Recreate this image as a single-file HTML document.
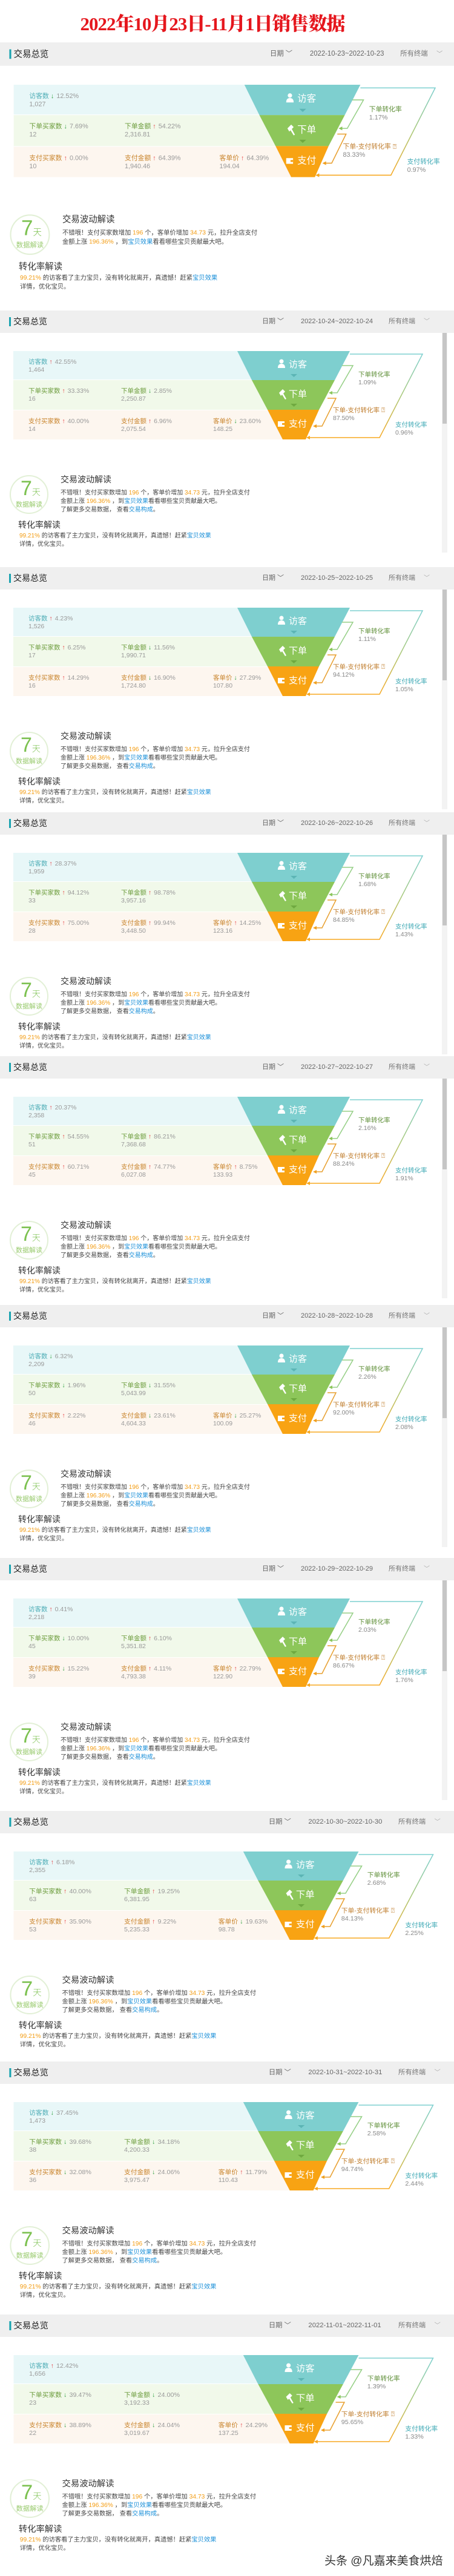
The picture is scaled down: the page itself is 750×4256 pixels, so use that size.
<!DOCTYPE html>
<html><head><meta charset="utf-8">
<style>
*{margin:0;padding:0;box-sizing:border-box}
body{width:750px;height:4256px;position:relative;background:#fff;font-family:"Liberation Sans","Noto Sans CJK SC",sans-serif;overflow:hidden}
.title{position:absolute;left:0;top:14px;width:702px;text-align:center;font-family:"Liberation Serif","Noto Serif CJK SC",serif;font-weight:900;font-size:31px;color:#e5161d;letter-spacing:-1px}
.p{position:absolute;left:0;width:750px;height:418px;transform-origin:0 0}
.hd{position:absolute;top:0;left:0;width:750px;height:37px;background:#efefef;font-size:13px;line-height:37px;color:#555}
.hd i{position:absolute;left:15px;top:11px;width:3px;height:15px;background:#1aa3b0}
.hd .t{position:absolute;left:22px;color:#222;font-size:14px}
.hd .d1{position:absolute;left:433px;font-size:11px;color:#666}
.hd .d2{position:absolute;left:497px;font-size:11px;color:#666}
.hd .d3{position:absolute;left:642px;font-size:11px;color:#777}
.hd .d4{position:absolute;left:700px;font-size:10px;color:#aaa}
.sb{position:absolute;left:730px;top:37px;width:9px;height:363px;background:#f3f3f3}
.sb b{position:absolute;left:1px;top:0;width:7px;height:150px;background:#c6c6c6}
.r{position:absolute;left:22px}
.r1{top:67px;height:47px;width:400px;background:#e8f7f8}
.r2{top:115px;height:49px;width:425px;background:#f1f9ea}
.r3{top:165px;height:48px;width:455px;background:#fdf6ef}
.c{position:absolute;font-size:10.5px;line-height:13px;white-space:nowrap}
.c em{font-style:normal;color:#999;display:block}
.r1 .c{color:#4eadb6}.r2 .c{color:#6d9d3e}.r3 .c{color:#c9852e}
.c .v{color:#999;margin-left:4px}
.u{color:#e4393c}.dn{color:#2a9d3a}
.fl{position:absolute;color:#fff;font-size:15px;left:477px;line-height:16px}
.rt{position:absolute;font-size:10.5px;line-height:13px;white-space:nowrap}
.rt em{font-style:normal;color:#888;display:block}
.k{position:absolute;left:16px;top:272px;width:64px;height:64px;border:2px solid #e2f0d6;border-radius:50%;text-align:center;color:#7cc150}
.k .n{position:absolute;left:16px;top:2px;font-size:34px;line-height:36px;font-weight:300}
.k .n small{font-size:14px}
.k .s{position:absolute;left:0;width:60px;top:38px;font-size:11px;color:#9acb6f}
.h1{position:absolute;left:100px;top:269px;font-size:14px;color:#333}
.tx{position:absolute;left:100px;top:295px;font-size:10px;line-height:14px;color:#444;white-space:nowrap}
.o{color:#f39c12}.b{color:#1a8fd8}
.h2{position:absolute;left:30px;top:344px;font-size:14px;color:#333}
.tx2{position:absolute;left:32px;top:366px;font-size:10px;line-height:14px;color:#444;white-space:nowrap}
.wm{position:absolute;left:536px;top:4216px;font-size:19px;color:#333;text-shadow:0 0 2px #fff,0 0 2px #fff}
</style></head><body>
<svg width="0" height="0" style="position:absolute">
<defs>
<linearGradient id="g" x1="0" y1="0" x2="0" y2="1"><stop offset="0" stop-color="#7ed0d0"/><stop offset="0.5" stop-color="#a8c878"/><stop offset="1" stop-color="#f7a820"/></linearGradient>
<symbol id="f" viewBox="0 0 750 418">
<polygon points="392,67 578,67 553,115 416,115" fill="#7ecfcf"/>
<polygon points="416,115 553,115 527,164 442,164" fill="#8dc65a"/>
<polygon points="442,164 527,164 505,213 467,213" fill="#f8a313"/>
<polygon points="480,105 491,105 485.5,110" fill="#5cb5b5"/>
<polygon points="480,154 491,154 485.5,159" fill="#6fa940"/>
<circle cx="465" cy="84" r="3.5" fill="#fff"/><path d="M459,95 q0,-7 6,-7 q6,0 6,7 z" fill="#fff"/>
<path d="M461,136 l6,-6 l4,4 l-3,3 l5,9 l-2,1 l-5,-8 l-2,2 z" fill="#fff"/>
<rect x="459" y="183" width="11" height="9" fill="#fff"/><rect x="466" y="186" width="4" height="3" fill="#f8a313"/>
<polyline points="578,72 698,72 627,210 510,210" fill="none" stroke="url(#g)" stroke-width="1.5"/>
<polygon points="506,210 512,207 512,213" fill="#f7a820"/>
<polyline points="565,91 583,91 557,136 547,136" fill="none" stroke="#95cf85" stroke-width="1.5"/>
<polygon points="543,136 549,133 549,139" fill="#8dc65a"/>
<polyline points="541,145 555,145 532,191 521,191" fill="none" stroke="#e8a030" stroke-width="1.5"/>
<polygon points="517,191 523,188 523,194" fill="#f0a020"/>
</symbol>
</defs></svg>

<div class="title">2022年10月23日-11月1日销售数据</div>

<!-- P1 -->
<div class="p" style="top:70px;transform:scale(1.03,1.045)">
<div class="hd"><i></i><span class="t">交易总览</span><span class="d1">日期 ﹀</span><span class="d2">2022-10-23~2022-10-23</span><span class="d3">所有终端</span><span class="d4">﹀</span></div>
<div class="r r1"><div class="c" style="left:25px;top:12px">访客数 <span class="dn">↓</span><span class="v">12.52%</span><em>1,027</em></div></div>
<div class="r r2"><div class="c" style="left:25px;top:12px">下单买家数 <span class="dn">↓</span><span class="v">7.69%</span><em>12</em></div><div class="c" style="left:178px;top:12px">下单金额 <span class="u">↑</span><span class="v">54.22%</span><em>2,316.81</em></div></div>
<div class="r r3"><div class="c" style="left:25px;top:12px">支付买家数 <span class="u">↑</span><span class="v">0.00%</span><em>10</em></div><div class="c" style="left:178px;top:12px">支付金额 <span class="u">↑</span><span class="v">64.39%</span><em>1,940.46</em></div><div class="c" style="left:330px;top:12px">客单价 <span class="u">↑</span><span class="v">64.39%</span><em>194.04</em></div></div>
<svg style="position:absolute;left:0;top:0" width="750" height="418"><use href="#f"/></svg>
<div class="fl" style="top:82px">访客</div><div class="fl" style="top:131px">下单</div><div class="fl" style="top:180px">支付</div>
<div class="rt" style="left:592px;top:100px;color:#5f8f38">下单转化率<em>1.17%</em></div>
<div class="rt" style="left:550px;top:159px;color:#c07e2e">下单-支付转化率 ⍰<em>83.33%</em></div>
<div class="rt" style="left:653px;top:183px;color:#3fa9b5">支付转化率<em>0.97%</em></div>
<div class="k"><div class="n">7<small>天</small></div><div class="s">数据解读</div></div>
<div class="h1">交易波动解读</div>
<div class="tx">不错哦！支付买家数增加 <span class="o">196</span> 个，客单价增加 <span class="o">34.73</span> 元，拉升全店支付<br>金额上涨 <span class="o">196.36%</span> ，到<span class="b">宝贝效果</span>看看哪些宝贝贡献最大吧。</div>
<div class="h2">转化率解读</div>
<div class="tx2"><span class="o">99.21%</span> 的访客看了主力宝贝，没有转化就离开，真遗憾！赶紧<span class="b">宝贝效果</span><br>详情，优化宝贝。</div>
</div>

<!-- P2 -->
<div class="p" style="top:513px">
<div class="hd"><i></i><span class="t">交易总览</span><span class="d1">日期 ﹀</span><span class="d2">2022-10-24~2022-10-24</span><span class="d3">所有终端</span><span class="d4">﹀</span></div>
<div class="sb"><b></b></div>
<div class="r r1"><div class="c" style="left:25px;top:12px">访客数 <span class="u">↑</span><span class="v">42.55%</span><em>1,464</em></div></div>
<div class="r r2"><div class="c" style="left:25px;top:12px">下单买家数 <span class="u">↑</span><span class="v">33.33%</span><em>16</em></div><div class="c" style="left:178px;top:12px">下单金额 <span class="dn">↓</span><span class="v">2.85%</span><em>2,250.87</em></div></div>
<div class="r r3"><div class="c" style="left:25px;top:12px">支付买家数 <span class="u">↑</span><span class="v">40.00%</span><em>14</em></div><div class="c" style="left:178px;top:12px">支付金额 <span class="u">↑</span><span class="v">6.96%</span><em>2,075.54</em></div><div class="c" style="left:330px;top:12px">客单价 <span class="dn">↓</span><span class="v">23.60%</span><em>148.25</em></div></div>
<svg style="position:absolute;left:0;top:0" width="750" height="418"><use href="#f"/></svg>
<div class="fl" style="top:82px">访客</div><div class="fl" style="top:131px">下单</div><div class="fl" style="top:180px">支付</div>
<div class="rt" style="left:592px;top:100px;color:#5f8f38">下单转化率<em>1.09%</em></div>
<div class="rt" style="left:550px;top:159px;color:#c07e2e">下单-支付转化率 ⍰<em>87.50%</em></div>
<div class="rt" style="left:653px;top:183px;color:#3fa9b5">支付转化率<em>0.96%</em></div>
<div class="k"><div class="n">7<small>天</small></div><div class="s">数据解读</div></div>
<div class="h1">交易波动解读</div>
<div class="tx">不错哦！支付买家数增加 <span class="o">196</span> 个，客单价增加 <span class="o">34.73</span> 元，拉升全店支付<br>金额上涨 <span class="o">196.36%</span> ，到<span class="b">宝贝效果</span>看看哪些宝贝贡献最大吧。<br>了解更多交易数据，  查看<span class="b">交易构成</span>。</div>
<div class="h2">转化率解读</div>
<div class="tx2"><span class="o">99.21%</span> 的访客看了主力宝贝，没有转化就离开，真遗憾！赶紧<span class="b">宝贝效果</span><br>详情，优化宝贝。</div>
</div>

<!-- P3 -->
<div class="p" style="top:937px">
<div class="hd"><i></i><span class="t">交易总览</span><span class="d1">日期 ﹀</span><span class="d2">2022-10-25~2022-10-25</span><span class="d3">所有终端</span><span class="d4">﹀</span></div>
<div class="sb"><b></b></div>
<div class="r r1"><div class="c" style="left:25px;top:12px">访客数 <span class="u">↑</span><span class="v">4.23%</span><em>1,526</em></div></div>
<div class="r r2"><div class="c" style="left:25px;top:12px">下单买家数 <span class="u">↑</span><span class="v">6.25%</span><em>17</em></div><div class="c" style="left:178px;top:12px">下单金额 <span class="dn">↓</span><span class="v">11.56%</span><em>1,990.71</em></div></div>
<div class="r r3"><div class="c" style="left:25px;top:12px">支付买家数 <span class="u">↑</span><span class="v">14.29%</span><em>16</em></div><div class="c" style="left:178px;top:12px">支付金额 <span class="dn">↓</span><span class="v">16.90%</span><em>1,724.80</em></div><div class="c" style="left:330px;top:12px">客单价 <span class="dn">↓</span><span class="v">27.29%</span><em>107.80</em></div></div>
<svg style="position:absolute;left:0;top:0" width="750" height="418"><use href="#f"/></svg>
<div class="fl" style="top:82px">访客</div><div class="fl" style="top:131px">下单</div><div class="fl" style="top:180px">支付</div>
<div class="rt" style="left:592px;top:100px;color:#5f8f38">下单转化率<em>1.11%</em></div>
<div class="rt" style="left:550px;top:159px;color:#c07e2e">下单-支付转化率 ⍰<em>94.12%</em></div>
<div class="rt" style="left:653px;top:183px;color:#3fa9b5">支付转化率<em>1.05%</em></div>
<div class="k"><div class="n">7<small>天</small></div><div class="s">数据解读</div></div>
<div class="h1">交易波动解读</div>
<div class="tx">不错哦！支付买家数增加 <span class="o">196</span> 个，客单价增加 <span class="o">34.73</span> 元，拉升全店支付<br>金额上涨 <span class="o">196.36%</span> ，到<span class="b">宝贝效果</span>看看哪些宝贝贡献最大吧。<br>了解更多交易数据，  查看<span class="b">交易构成</span>。</div>
<div class="h2">转化率解读</div>
<div class="tx2"><span class="o">99.21%</span> 的访客看了主力宝贝，没有转化就离开，真遗憾！赶紧<span class="b">宝贝效果</span><br>详情，优化宝贝。</div>
</div>

<!-- P4 -->
<div class="p" style="top:1342px">
<div class="hd"><i></i><span class="t">交易总览</span><span class="d1">日期 ﹀</span><span class="d2">2022-10-26~2022-10-26</span><span class="d3">所有终端</span><span class="d4">﹀</span></div>
<div class="sb"><b></b></div>
<div class="r r1"><div class="c" style="left:25px;top:12px">访客数 <span class="u">↑</span><span class="v">28.37%</span><em>1,959</em></div></div>
<div class="r r2"><div class="c" style="left:25px;top:12px">下单买家数 <span class="u">↑</span><span class="v">94.12%</span><em>33</em></div><div class="c" style="left:178px;top:12px">下单金额 <span class="u">↑</span><span class="v">98.78%</span><em>3,957.16</em></div></div>
<div class="r r3"><div class="c" style="left:25px;top:12px">支付买家数 <span class="u">↑</span><span class="v">75.00%</span><em>28</em></div><div class="c" style="left:178px;top:12px">支付金额 <span class="u">↑</span><span class="v">99.94%</span><em>3,448.50</em></div><div class="c" style="left:330px;top:12px">客单价 <span class="u">↑</span><span class="v">14.25%</span><em>123.16</em></div></div>
<svg style="position:absolute;left:0;top:0" width="750" height="418"><use href="#f"/></svg>
<div class="fl" style="top:82px">访客</div><div class="fl" style="top:131px">下单</div><div class="fl" style="top:180px">支付</div>
<div class="rt" style="left:592px;top:100px;color:#5f8f38">下单转化率<em>1.68%</em></div>
<div class="rt" style="left:550px;top:159px;color:#c07e2e">下单-支付转化率 ⍰<em>84.85%</em></div>
<div class="rt" style="left:653px;top:183px;color:#3fa9b5">支付转化率<em>1.43%</em></div>
<div class="k"><div class="n">7<small>天</small></div><div class="s">数据解读</div></div>
<div class="h1">交易波动解读</div>
<div class="tx">不错哦！支付买家数增加 <span class="o">196</span> 个，客单价增加 <span class="o">34.73</span> 元，拉升全店支付<br>金额上涨 <span class="o">196.36%</span> ，到<span class="b">宝贝效果</span>看看哪些宝贝贡献最大吧。<br>了解更多交易数据，  查看<span class="b">交易构成</span>。</div>
<div class="h2">转化率解读</div>
<div class="tx2"><span class="o">99.21%</span> 的访客看了主力宝贝，没有转化就离开，真遗憾！赶紧<span class="b">宝贝效果</span><br>详情，优化宝贝。</div>
</div>

<!-- P5 -->
<div class="p" style="top:1745px">
<div class="hd"><i></i><span class="t">交易总览</span><span class="d1">日期 ﹀</span><span class="d2">2022-10-27~2022-10-27</span><span class="d3">所有终端</span><span class="d4">﹀</span></div>
<div class="sb"><b></b></div>
<div class="r r1"><div class="c" style="left:25px;top:12px">访客数 <span class="u">↑</span><span class="v">20.37%</span><em>2,358</em></div></div>
<div class="r r2"><div class="c" style="left:25px;top:12px">下单买家数 <span class="u">↑</span><span class="v">54.55%</span><em>51</em></div><div class="c" style="left:178px;top:12px">下单金额 <span class="u">↑</span><span class="v">86.21%</span><em>7,368.68</em></div></div>
<div class="r r3"><div class="c" style="left:25px;top:12px">支付买家数 <span class="u">↑</span><span class="v">60.71%</span><em>45</em></div><div class="c" style="left:178px;top:12px">支付金额 <span class="u">↑</span><span class="v">74.77%</span><em>6,027.08</em></div><div class="c" style="left:330px;top:12px">客单价 <span class="u">↑</span><span class="v">8.75%</span><em>133.93</em></div></div>
<svg style="position:absolute;left:0;top:0" width="750" height="418"><use href="#f"/></svg>
<div class="fl" style="top:82px">访客</div><div class="fl" style="top:131px">下单</div><div class="fl" style="top:180px">支付</div>
<div class="rt" style="left:592px;top:100px;color:#5f8f38">下单转化率<em>2.16%</em></div>
<div class="rt" style="left:550px;top:159px;color:#c07e2e">下单-支付转化率 ⍰<em>88.24%</em></div>
<div class="rt" style="left:653px;top:183px;color:#3fa9b5">支付转化率<em>1.91%</em></div>
<div class="k"><div class="n">7<small>天</small></div><div class="s">数据解读</div></div>
<div class="h1">交易波动解读</div>
<div class="tx">不错哦！支付买家数增加 <span class="o">196</span> 个，客单价增加 <span class="o">34.73</span> 元，拉升全店支付<br>金额上涨 <span class="o">196.36%</span> ，到<span class="b">宝贝效果</span>看看哪些宝贝贡献最大吧。<br>了解更多交易数据，  查看<span class="b">交易构成</span>。</div>
<div class="h2">转化率解读</div>
<div class="tx2"><span class="o">99.21%</span> 的访客看了主力宝贝，没有转化就离开，真遗憾！赶紧<span class="b">宝贝效果</span><br>详情，优化宝贝。</div>
</div>

<!-- P6 -->
<div class="p" style="top:2156px">
<div class="hd"><i></i><span class="t">交易总览</span><span class="d1">日期 ﹀</span><span class="d2">2022-10-28~2022-10-28</span><span class="d3">所有终端</span><span class="d4">﹀</span></div>
<div class="sb"><b></b></div>
<div class="r r1"><div class="c" style="left:25px;top:12px">访客数 <span class="dn">↓</span><span class="v">6.32%</span><em>2,209</em></div></div>
<div class="r r2"><div class="c" style="left:25px;top:12px">下单买家数 <span class="dn">↓</span><span class="v">1.96%</span><em>50</em></div><div class="c" style="left:178px;top:12px">下单金额 <span class="dn">↓</span><span class="v">31.55%</span><em>5,043.99</em></div></div>
<div class="r r3"><div class="c" style="left:25px;top:12px">支付买家数 <span class="u">↑</span><span class="v">2.22%</span><em>46</em></div><div class="c" style="left:178px;top:12px">支付金额 <span class="dn">↓</span><span class="v">23.61%</span><em>4,604.33</em></div><div class="c" style="left:330px;top:12px">客单价 <span class="dn">↓</span><span class="v">25.27%</span><em>100.09</em></div></div>
<svg style="position:absolute;left:0;top:0" width="750" height="418"><use href="#f"/></svg>
<div class="fl" style="top:82px">访客</div><div class="fl" style="top:131px">下单</div><div class="fl" style="top:180px">支付</div>
<div class="rt" style="left:592px;top:100px;color:#5f8f38">下单转化率<em>2.26%</em></div>
<div class="rt" style="left:550px;top:159px;color:#c07e2e">下单-支付转化率 ⍰<em>92.00%</em></div>
<div class="rt" style="left:653px;top:183px;color:#3fa9b5">支付转化率<em>2.08%</em></div>
<div class="k"><div class="n">7<small>天</small></div><div class="s">数据解读</div></div>
<div class="h1">交易波动解读</div>
<div class="tx">不错哦！支付买家数增加 <span class="o">196</span> 个，客单价增加 <span class="o">34.73</span> 元，拉升全店支付<br>金额上涨 <span class="o">196.36%</span> ，到<span class="b">宝贝效果</span>看看哪些宝贝贡献最大吧。<br>了解更多交易数据，  查看<span class="b">交易构成</span>。</div>
<div class="h2">转化率解读</div>
<div class="tx2"><span class="o">99.21%</span> 的访客看了主力宝贝，没有转化就离开，真遗憾！赶紧<span class="b">宝贝效果</span><br>详情，优化宝贝。</div>
</div>

<!-- P7 -->
<div class="p" style="top:2574px">
<div class="hd"><i></i><span class="t">交易总览</span><span class="d1">日期 ﹀</span><span class="d2">2022-10-29~2022-10-29</span><span class="d3">所有终端</span><span class="d4">﹀</span></div>
<div class="sb"><b></b></div>
<div class="r r1"><div class="c" style="left:25px;top:12px">访客数 <span class="u">↑</span><span class="v">0.41%</span><em>2,218</em></div></div>
<div class="r r2"><div class="c" style="left:25px;top:12px">下单买家数 <span class="dn">↓</span><span class="v">10.00%</span><em>45</em></div><div class="c" style="left:178px;top:12px">下单金额 <span class="u">↑</span><span class="v">6.10%</span><em>5,351.82</em></div></div>
<div class="r r3"><div class="c" style="left:25px;top:12px">支付买家数 <span class="dn">↓</span><span class="v">15.22%</span><em>39</em></div><div class="c" style="left:178px;top:12px">支付金额 <span class="u">↑</span><span class="v">4.11%</span><em>4,793.38</em></div><div class="c" style="left:330px;top:12px">客单价 <span class="u">↑</span><span class="v">22.79%</span><em>122.90</em></div></div>
<svg style="position:absolute;left:0;top:0" width="750" height="418"><use href="#f"/></svg>
<div class="fl" style="top:82px">访客</div><div class="fl" style="top:131px">下单</div><div class="fl" style="top:180px">支付</div>
<div class="rt" style="left:592px;top:100px;color:#5f8f38">下单转化率<em>2.03%</em></div>
<div class="rt" style="left:550px;top:159px;color:#c07e2e">下单-支付转化率 ⍰<em>86.67%</em></div>
<div class="rt" style="left:653px;top:183px;color:#3fa9b5">支付转化率<em>1.76%</em></div>
<div class="k"><div class="n">7<small>天</small></div><div class="s">数据解读</div></div>
<div class="h1">交易波动解读</div>
<div class="tx">不错哦！支付买家数增加 <span class="o">196</span> 个，客单价增加 <span class="o">34.73</span> 元，拉升全店支付<br>金额上涨 <span class="o">196.36%</span> ，到<span class="b">宝贝效果</span>看看哪些宝贝贡献最大吧。<br>了解更多交易数据，  查看<span class="b">交易构成</span>。</div>
<div class="h2">转化率解读</div>
<div class="tx2"><span class="o">99.21%</span> 的访客看了主力宝贝，没有转化就离开，真遗憾！赶紧<span class="b">宝贝效果</span><br>详情，优化宝贝。</div>
</div>

<!-- P8 -->
<div class="p" style="top:2992px;transform:scaleX(1.025)">
<div class="hd"><i></i><span class="t">交易总览</span><span class="d1">日期 ﹀</span><span class="d2">2022-10-30~2022-10-30</span><span class="d3">所有终端</span><span class="d4">﹀</span></div>
<div class="r r1"><div class="c" style="left:25px;top:12px">访客数 <span class="u">↑</span><span class="v">6.18%</span><em>2,355</em></div></div>
<div class="r r2"><div class="c" style="left:25px;top:12px">下单买家数 <span class="u">↑</span><span class="v">40.00%</span><em>63</em></div><div class="c" style="left:178px;top:12px">下单金额 <span class="u">↑</span><span class="v">19.25%</span><em>6,381.95</em></div></div>
<div class="r r3"><div class="c" style="left:25px;top:12px">支付买家数 <span class="u">↑</span><span class="v">35.90%</span><em>53</em></div><div class="c" style="left:178px;top:12px">支付金额 <span class="u">↑</span><span class="v">9.22%</span><em>5,235.33</em></div><div class="c" style="left:330px;top:12px">客单价 <span class="dn">↓</span><span class="v">19.63%</span><em>98.78</em></div></div>
<svg style="position:absolute;left:0;top:0" width="750" height="418"><use href="#f"/></svg>
<div class="fl" style="top:82px">访客</div><div class="fl" style="top:131px">下单</div><div class="fl" style="top:180px">支付</div>
<div class="rt" style="left:592px;top:100px;color:#5f8f38">下单转化率<em>2.68%</em></div>
<div class="rt" style="left:550px;top:159px;color:#c07e2e">下单-支付转化率 ⍰<em>84.13%</em></div>
<div class="rt" style="left:653px;top:183px;color:#3fa9b5">支付转化率<em>2.25%</em></div>
<div class="k"><div class="n">7<small>天</small></div><div class="s">数据解读</div></div>
<div class="h1">交易波动解读</div>
<div class="tx">不错哦！支付买家数增加 <span class="o">196</span> 个，客单价增加 <span class="o">34.73</span> 元，拉升全店支付<br>金额上涨 <span class="o">196.36%</span> ，到<span class="b">宝贝效果</span>看看哪些宝贝贡献最大吧。<br>了解更多交易数据，  查看<span class="b">交易构成</span>。</div>
<div class="h2">转化率解读</div>
<div class="tx2"><span class="o">99.21%</span> 的访客看了主力宝贝，没有转化就离开，真遗憾！赶紧<span class="b">宝贝效果</span><br>详情，优化宝贝。</div>
</div>

<!-- P9 -->
<div class="p" style="top:3406px;transform:scaleX(1.025)">
<div class="hd"><i></i><span class="t">交易总览</span><span class="d1">日期 ﹀</span><span class="d2">2022-10-31~2022-10-31</span><span class="d3">所有终端</span><span class="d4">﹀</span></div>
<div class="r r1"><div class="c" style="left:25px;top:12px">访客数 <span class="dn">↓</span><span class="v">37.45%</span><em>1,473</em></div></div>
<div class="r r2"><div class="c" style="left:25px;top:12px">下单买家数 <span class="dn">↓</span><span class="v">39.68%</span><em>38</em></div><div class="c" style="left:178px;top:12px">下单金额 <span class="dn">↓</span><span class="v">34.18%</span><em>4,200.33</em></div></div>
<div class="r r3"><div class="c" style="left:25px;top:12px">支付买家数 <span class="dn">↓</span><span class="v">32.08%</span><em>36</em></div><div class="c" style="left:178px;top:12px">支付金额 <span class="dn">↓</span><span class="v">24.06%</span><em>3,975.47</em></div><div class="c" style="left:330px;top:12px">客单价 <span class="u">↑</span><span class="v">11.79%</span><em>110.43</em></div></div>
<svg style="position:absolute;left:0;top:0" width="750" height="418"><use href="#f"/></svg>
<div class="fl" style="top:82px">访客</div><div class="fl" style="top:131px">下单</div><div class="fl" style="top:180px">支付</div>
<div class="rt" style="left:592px;top:100px;color:#5f8f38">下单转化率<em>2.58%</em></div>
<div class="rt" style="left:550px;top:159px;color:#c07e2e">下单-支付转化率 ⍰<em>94.74%</em></div>
<div class="rt" style="left:653px;top:183px;color:#3fa9b5">支付转化率<em>2.44%</em></div>
<div class="k"><div class="n">7<small>天</small></div><div class="s">数据解读</div></div>
<div class="h1">交易波动解读</div>
<div class="tx">不错哦！支付买家数增加 <span class="o">196</span> 个，客单价增加 <span class="o">34.73</span> 元，拉升全店支付<br>金额上涨 <span class="o">196.36%</span> ，到<span class="b">宝贝效果</span>看看哪些宝贝贡献最大吧。<br>了解更多交易数据，  查看<span class="b">交易构成</span>。</div>
<div class="h2">转化率解读</div>
<div class="tx2"><span class="o">99.21%</span> 的访客看了主力宝贝，没有转化就离开，真遗憾！赶紧<span class="b">宝贝效果</span><br>详情，优化宝贝。</div>
</div>

<!-- P10 -->
<div class="p" style="top:3824px;transform:scaleX(1.025)">
<div class="hd"><i></i><span class="t">交易总览</span><span class="d1">日期 ﹀</span><span class="d2">2022-11-01~2022-11-01</span><span class="d3">所有终端</span><span class="d4">﹀</span></div>
<div class="r r1"><div class="c" style="left:25px;top:12px">访客数 <span class="u">↑</span><span class="v">12.42%</span><em>1,656</em></div></div>
<div class="r r2"><div class="c" style="left:25px;top:12px">下单买家数 <span class="dn">↓</span><span class="v">39.47%</span><em>23</em></div><div class="c" style="left:178px;top:12px">下单金额 <span class="dn">↓</span><span class="v">24.00%</span><em>3,192.33</em></div></div>
<div class="r r3"><div class="c" style="left:25px;top:12px">支付买家数 <span class="dn">↓</span><span class="v">38.89%</span><em>22</em></div><div class="c" style="left:178px;top:12px">支付金额 <span class="dn">↓</span><span class="v">24.04%</span><em>3,019.67</em></div><div class="c" style="left:330px;top:12px">客单价 <span class="u">↑</span><span class="v">24.29%</span><em>137.25</em></div></div>
<svg style="position:absolute;left:0;top:0" width="750" height="418"><use href="#f"/></svg>
<div class="fl" style="top:82px">访客</div><div class="fl" style="top:131px">下单</div><div class="fl" style="top:180px">支付</div>
<div class="rt" style="left:592px;top:100px;color:#5f8f38">下单转化率<em>1.39%</em></div>
<div class="rt" style="left:550px;top:159px;color:#c07e2e">下单-支付转化率 ⍰<em>95.65%</em></div>
<div class="rt" style="left:653px;top:183px;color:#3fa9b5">支付转化率<em>1.33%</em></div>
<div class="k"><div class="n">7<small>天</small></div><div class="s">数据解读</div></div>
<div class="h1">交易波动解读</div>
<div class="tx">不错哦！支付买家数增加 <span class="o">196</span> 个，客单价增加 <span class="o">34.73</span> 元，拉升全店支付<br>金额上涨 <span class="o">196.36%</span> ，到<span class="b">宝贝效果</span>看看哪些宝贝贡献最大吧。<br>了解更多交易数据，  查看<span class="b">交易构成</span>。</div>
<div class="h2">转化率解读</div>
<div class="tx2"><span class="o">99.21%</span> 的访客看了主力宝贝，没有转化就离开，真遗憾！赶紧<span class="b">宝贝效果</span><br>详情，优化宝贝。</div>
</div>

<div class="wm">头条 @凡嘉来美食烘焙</div>
</body></html>
